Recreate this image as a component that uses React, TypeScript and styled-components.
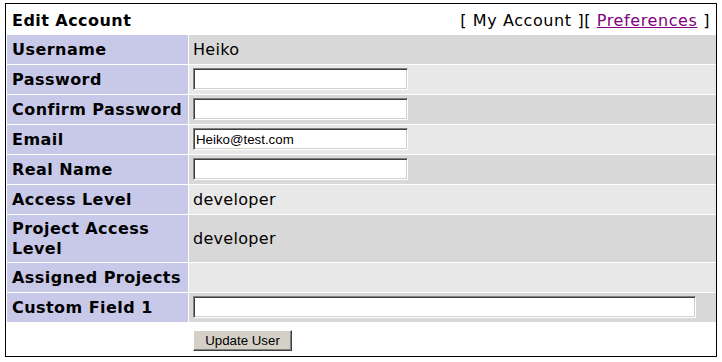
import * as React from "react";
import styled, { createGlobalStyle } from "styled-components";

const GlobalStyle = createGlobalStyle`
  body {
    margin: 0;
    background: #fff;
    color: #000;
    font-family: "DejaVu Sans", Verdana, sans-serif;
  }
`;

const Page = styled.div`
  padding: 3px 0 0 5px;
`;

const Frame = styled.div`
  width: 712px;
  height: 354px;
  box-sizing: border-box;
  border: 1px solid #000;
  padding: 0 0 1px 1px;
  display: grid;
  grid-template-columns: 181px 527px;
  gap: 1px;
  align-content: start;
  font-size: 16px;
  line-height: 20px;
`;

const Header = styled.div`
  grid-column: 1 / -1;
  height: 30px;
  box-sizing: border-box;
  display: flex;
  align-items: center;
  justify-content: space-between;
  padding: 3px 6px 0 5px;
`;

const Title = styled.span`
  font-weight: bold;
  letter-spacing: 0.45px;
`;

const Nav = styled.span`
  white-space: pre;
  letter-spacing: 0.6px;
`;

const NavLink = styled.a`
  color: #800080;
  text-decoration: underline;
`;

const Label = styled.div`
  background: #c8c8e8;
  font-weight: bold;
  letter-spacing: 0.45px;
  display: flex;
  align-items: center;
  min-height: 29px;
  box-sizing: border-box;
  padding: 4px 4px 4px 5px;
`;

const Value = styled.div<{ $shade: "dark" | "light" }>`
  background: ${(p) => (p.$shade === "dark" ? "#d8d8d8" : "#e8e8e8")};
  display: flex;
  align-items: center;
  min-height: 29px;
  box-sizing: border-box;
  padding: 4px;
  letter-spacing: 0.3px;
`;

const Field = styled.input<{ $wide?: boolean }>`
  width: ${(p) => (p.$wide ? "503px" : "215px")};
  height: 22px;
  box-sizing: border-box;
  margin: -1px 0 0;
  padding: 1px 2px;
  background: #fff;
  border-style: solid;
  border-width: 1px;
  border-color: #808080 #fff #fff #808080;
  box-shadow: inset 1px 1px 0 #404040, inset -1px -1px 0 #d4d0c8;
  font-family: "Liberation Sans", Arial, sans-serif;
  font-size: 13.3px;
  letter-spacing: 0;
  color: #000;
  outline: none;
`;

const Blank = styled.div`
  background: #fff;
`;

const Actions = styled.div`
  padding: 7px 4px 4px;
`;

const SubmitButton = styled.button`
  width: 99px;
  height: 21px;
  margin: 0;
  padding: 0;
  background: #d4d0c8;
  border-style: solid;
  border-width: 1px;
  border-color: #fff #404040 #404040 #fff;
  box-shadow: inset -1px -1px 0 #808080;
  font-family: "Liberation Sans", Arial, sans-serif;
  font-size: 13.3px;
  color: #000;
`;

type Row = {
  label: string;
  kind: "text" | "input" | "password" | "none";
  value?: string;
  wide?: boolean;
};

const rows: Row[] = [
  { label: "Username", kind: "text", value: "Heiko" },
  { label: "Password", kind: "password" },
  { label: "Confirm Password", kind: "password" },
  { label: "Email", kind: "input", value: "Heiko@test.com" },
  { label: "Real Name", kind: "input" },
  { label: "Access Level", kind: "text", value: "developer" },
  { label: "Project Access Level", kind: "text", value: "developer" },
  { label: "Assigned Projects", kind: "none" },
  { label: "Custom Field 1", kind: "input", wide: true },
];

export default function App() {
  return (
    <Page>
      <GlobalStyle />
      <Frame>
        <Header>
          <Title>Edit Account</Title>
          <Nav>
            {"[ My Account ][ "}
            <NavLink href="#">Preferences</NavLink>
            {" ]"}
          </Nav>
        </Header>
        {rows.map((row, i) => (
          <React.Fragment key={row.label}>
            <Label>{row.label}</Label>
            <Value $shade={i % 2 === 0 ? "dark" : "light"}>
              {row.kind === "text" && row.value}
              {row.kind === "password" && <Field type="password" />}
              {row.kind === "input" && (
                <Field type="text" defaultValue={row.value} $wide={row.wide} />
              )}
            </Value>
          </React.Fragment>
        ))}
        <Blank />
        <Actions>
          <SubmitButton type="button">Update User</SubmitButton>
        </Actions>
      </Frame>
    </Page>
  );
}
